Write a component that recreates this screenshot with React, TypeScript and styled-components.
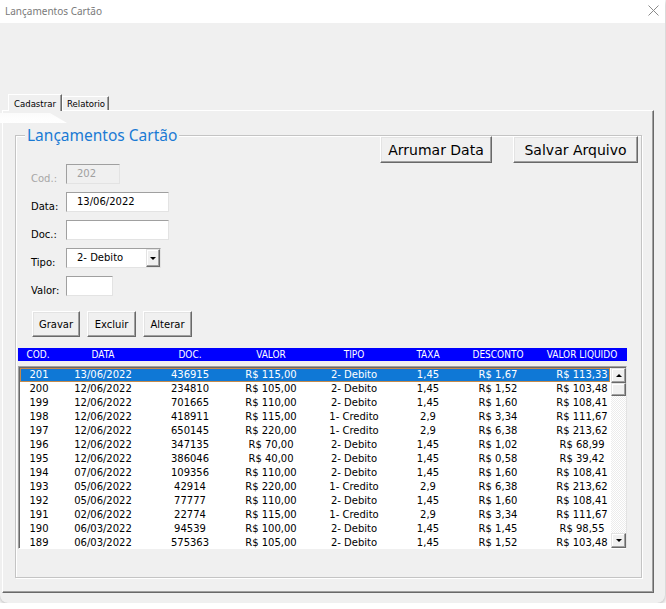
import React from 'react';
import styled, { createGlobalStyle } from 'styled-components';

const Global = createGlobalStyle`
  html, body { margin: 0; padding: 0; background: #ffffff; }
  body { font-family: "DejaVu Sans", sans-serif; }
  * { box-sizing: border-box; }
`;

const Window = styled.div`
  width: 665px;
  height: 603px;
  background: #f0f0f0;
  border-radius: 0 0 8px 8px;
  box-shadow: 0 1px 5px rgba(0, 0, 0, 0.35);
  display: flex;
  flex-direction: column;
  overflow: hidden;
`;

const TitleBar = styled.div`
  height: 23px;
  background: #ffffff;
  display: flex;
  align-items: center;
  justify-content: space-between;
  padding: 0 6px 2px 5px;
`;

const Title = styled.span`
  font-family: "Noto Sans", sans-serif;
  font-size: 10px;
  color: #7a7a7a;
`;

const Client = styled.div`
  padding-top: 70px;
  display: flex;
  flex-direction: column;
`;

const TabStrip = styled.div`
  display: flex;
  align-items: flex-end;
  height: 17px;
  padding-left: 8px;
`;

const Tab = styled.div<{ $active?: boolean; $w: number }>`
  width: ${(p) => p.$w}px;
  height: ${(p) => (p.$active ? 17 : 14)}px;
  font-family: "DejaVu Sans Condensed", "DejaVu Sans", sans-serif;
  font-stretch: condensed;
  font-size: 9.5px;
  color: #000;
  display: flex;
  align-items: center;
  padding-left: ${(p) => (p.$active ? 5 : 4)}px;
  border-top: 1px solid #ffffff;
  border-left: 1px solid #ffffff;
  border-right: 1px solid #696969;
  box-shadow: inset -1px 0 0 #a0a0a0;
  background: #f0f0f0;
  margin-bottom: ${(p) => (p.$active ? -1 : 0)}px;
  position: relative;
  z-index: ${(p) => (p.$active ? 1 : 0)};
`;

const TabPage = styled.div`
  margin-left: 2px;
  width: 652px;
  height: 483px;
  border-top: 1px solid #ffffff;
  border-left: 1px solid #ffffff;
  border-right: 1px solid #696969;
  border-bottom: 1px solid #696969;
  box-shadow: inset -1px -1px 0 #a0a0a0;
  display: flex;
  flex-direction: column;
  align-items: flex-start;
`;

const Glare = styled.div`
  width: 67px;
  height: 10px;
  margin: 2px 0 -12px -3px;
  background: linear-gradient(#fbfbfb, #ffffff);
  clip-path: polygon(0 0, 50px 0, 67px 100%, 0 100%);
`;

const Frame = styled.div`
  margin: 24px 0 0 12px;
  width: 627px;
  height: 443px;
  border: 1px solid #c4c4c4;
  box-shadow: 1px 1px 0 #ffffff, inset 1px 1px 0 #ffffff;
  display: flex;
  flex-direction: column;
  align-items: flex-start;
`;

const Legend = styled.div`
  margin: -11px 0 -9px 9px;
  padding: 0 2px;
  height: 20px;
  line-height: 20px;
  background: #f0f0f0;
  font-family: "Noto Sans", sans-serif;
  font-size: 15.5px;
  color: #1a7ad4;
  white-space: nowrap;
`;

const TopRow = styled.div`
  align-self: stretch;
  display: flex;
  justify-content: flex-end;
  gap: 21px;
  padding-right: 3px;
  height: 27px;
`;

const Button = styled.button<{ $w: number; $h: number; $fs: number }>`
  width: ${(p) => p.$w}px;
  height: ${(p) => p.$h}px;
  font-family: "DejaVu Sans", sans-serif;
  font-size: ${(p) => p.$fs}px;
  color: #000;
  background: #f0f0f0;
  padding: 0;
  border: 1px solid;
  border-color: #ffffff #696969 #696969 #ffffff;
  box-shadow: inset -1px -1px 0 #a0a0a0, inset 1px 1px 0 #e3e3e3;
  display: flex;
  align-items: center;
  justify-content: center;
  white-space: nowrap;
`;

const Form = styled.div`
  margin-top: 1px;
  padding-left: 15px;
  display: grid;
  grid-template-columns: 35px auto;
  row-gap: 8px;
  justify-items: start;
`;

const Label = styled.span<{ $disabled?: boolean }>`
  align-self: end;
  margin-bottom: -1px;
  font-size: 10px;
  line-height: 12px;
  color: ${(p) => (p.$disabled ? '#a7a7a7' : '#000')};
`;

const TextBox = styled.div<{ $w: number; $disabled?: boolean }>`
  width: ${(p) => p.$w}px;
  height: 20px;
  background: ${(p) => (p.$disabled ? '#f0f0f0' : '#ffffff')};
  border: 1px solid;
  border-color: #a0a0a0 #e3e3e3 #e3e3e3 #a0a0a0;
  padding-left: 10px;
  font-size: 10px;
  line-height: 18px;
  color: ${(p) => (p.$disabled ? '#a0a0a0' : '#000')};
  display: flex;
  align-items: center;
`;

const Combo = styled(TextBox)`
  padding-right: 0;
  justify-content: space-between;
`;

const DropButton = styled.div`
  width: 14px;
  height: 18px;
  background: #f0f0f0;
  border: 1px solid;
  border-color: #e3e3e3 #696969 #696969 #e3e3e3;
  box-shadow: inset -1px -1px 0 #a0a0a0, inset 1px 1px 0 #ffffff;
  display: flex;
  align-items: center;
  justify-content: center;
`;

const Arrow = styled.span<{ $up?: boolean }>`
  width: 0;
  height: 0;
  border-left: 3px solid transparent;
  border-right: 3px solid transparent;
  ${(p) => (p.$up ? 'border-bottom: 3px solid #000;' : 'border-top: 3px solid #000;')}
`;

const ActionRow = styled.div`
  margin-top: 15px;
  padding-left: 16px;
  display: flex;
  gap: 7px;
`;

const COLS_HEAD = '40px 90px 84px 78px 88px 60px 80px 88px';
const COLS_ROW = '38px 90px 84px 78px 88px 60px 80px 88px';

const HeaderBar = styled.div`
  margin: 11px 0 0 2px;
  width: 609px;
  height: 13px;
  background: #0000ff;
  color: #ffffff;
  display: grid;
  grid-template-columns: ${COLS_HEAD};
  font-family: "DejaVu Sans Condensed", "DejaVu Sans", sans-serif;
  font-stretch: condensed;
  font-size: 10px;
  line-height: 13px;
  text-align: center;
  white-space: nowrap;
`;

const ListBox = styled.div`
  margin: 5px 0 0 2px;
  width: 609px;
  height: 183px;
  background: #ffffff;
  border-top: 1px solid #a0a0a0;
  border-left: 1px solid #a0a0a0;
  border-right: 1px solid #e3e3e3;
  border-bottom: 1px solid #ffffff;
  box-shadow: inset 1px 1px 0 #696969;
  padding: 1px 0 0 1px;
  display: flex;
`;

const Rows = styled.div`
  flex: 1;
  overflow: hidden;
`;

const Row = styled.div<{ $selected?: boolean }>`
  height: 14px;
  display: grid;
  grid-template-columns: ${COLS_ROW};
  font-size: 10px;
  line-height: 14px;
  text-align: center;
  white-space: nowrap;
  color: ${(p) => (p.$selected ? '#ffffff' : '#000000')};
  background: ${(p) => (p.$selected ? '#0f78d6' : 'transparent')};
  box-shadow: ${(p) => (p.$selected ? 'inset 0 0 0 1px #c58a4a' : 'none')};
`;

const ScrollBar = styled.div`
  width: 15px;
  margin-left: 1px;
  display: flex;
  flex-direction: column;
`;

const ScrollBtn = styled.div<{ $h: number }>`
  height: ${(p) => p.$h}px;
  background: #f0f0f0;
  border: 1px solid;
  border-color: #e3e3e3 #696969 #696969 #e3e3e3;
  box-shadow: inset -1px -1px 0 #a0a0a0, inset 1px 1px 0 #ffffff;
  display: flex;
  align-items: center;
  justify-content: center;
`;

const Track = styled.div`
  flex: 1;
  background-color: #ffffff;
  background-image: repeating-conic-gradient(#ececec 0 25%, #ffffff 0 50%);
  background-size: 2px 2px;
`;

type R = [string, string, string, string, string, string, string, string];

const data: R[] = [
  ['201', '13/06/2022', '436915', 'R$ 115,00', '2- Debito', '1,45', 'R$ 1,67', 'R$ 113,33'],
  ['200', '12/06/2022', '234810', 'R$ 105,00', '2- Debito', '1,45', 'R$ 1,52', 'R$ 103,48'],
  ['199', '12/06/2022', '701665', 'R$ 110,00', '2- Debito', '1,45', 'R$ 1,60', 'R$ 108,41'],
  ['198', '12/06/2022', '418911', 'R$ 115,00', '1- Credito', '2,9', 'R$ 3,34', 'R$ 111,67'],
  ['197', '12/06/2022', '650145', 'R$ 220,00', '1- Credito', '2,9', 'R$ 6,38', 'R$ 213,62'],
  ['196', '12/06/2022', '347135', 'R$ 70,00', '2- Debito', '1,45', 'R$ 1,02', 'R$ 68,99'],
  ['195', '12/06/2022', '386046', 'R$ 40,00', '2- Debito', '1,45', 'R$ 0,58', 'R$ 39,42'],
  ['194', '07/06/2022', '109356', 'R$ 110,00', '2- Debito', '1,45', 'R$ 1,60', 'R$ 108,41'],
  ['193', '05/06/2022', '42914', 'R$ 220,00', '1- Credito', '2,9', 'R$ 6,38', 'R$ 213,62'],
  ['192', '05/06/2022', '77777', 'R$ 110,00', '2- Debito', '1,45', 'R$ 1,60', 'R$ 108,41'],
  ['191', '02/06/2022', '22774', 'R$ 115,00', '1- Credito', '2,9', 'R$ 3,34', 'R$ 111,67'],
  ['190', '06/03/2022', '94539', 'R$ 100,00', '2- Debito', '1,45', 'R$ 1,45', 'R$ 98,55'],
  ['189', '06/03/2022', '575363', 'R$ 105,00', '2- Debito', '1,45', 'R$ 1,52', 'R$ 103,48'],
];

const headers = ['COD.', 'DATA', 'DOC.', 'VALOR', 'TIPO', 'TAXA', 'DESCONTO', 'VALOR LIQUIDO'];

export default function App() {
  return (
    <>
      <Global />
      <Window>
        <TitleBar>
          <Title>Lançamentos Cartão</Title>
          <svg width="11" height="11" viewBox="0 0 11 11">
            <path d="M0.5 0.5 L10.5 10.5 M10.5 0.5 L0.5 10.5" stroke="#8a8a8a" strokeWidth="1" fill="none" />
          </svg>
        </TitleBar>
        <Client>
          <TabStrip>
            <Tab $active $w={54}>Cadastrar</Tab>
            <Tab $w={47}>Relatorio</Tab>
          </TabStrip>
          <TabPage>
            <Glare />
            <Frame>
              <Legend>Lançamentos Cartão</Legend>
              <TopRow>
                <Button $w={112} $h={27} $fs={14}>Arrumar Data</Button>
                <Button $w={125} $h={27} $fs={14}>Salvar Arquivo</Button>
              </TopRow>
              <Form>
                <Label $disabled>Cod.:</Label>
                <TextBox $w={54} $disabled>202</TextBox>
                <Label>Data:</Label>
                <TextBox $w={103}>13/06/2022</TextBox>
                <Label>Doc.:</Label>
                <TextBox $w={103} />
                <Label>Tipo:</Label>
                <Combo $w={95}>
                  <span>2- Debito</span>
                  <DropButton>
                    <Arrow />
                  </DropButton>
                </Combo>
                <Label>Valor:</Label>
                <TextBox $w={47} />
              </Form>
              <ActionRow>
                <Button $w={48} $h={26} $fs={10}>Gravar</Button>
                <Button $w={49} $h={26} $fs={10}>Excluir</Button>
                <Button $w={49} $h={26} $fs={10}>Alterar</Button>
              </ActionRow>
              <HeaderBar>
                {headers.map((h) => (
                  <span key={h}>{h}</span>
                ))}
              </HeaderBar>
              <ListBox>
                <Rows>
                  {data.map((r, i) => (
                    <Row key={r[0]} $selected={i === 0}>
                      {r.map((c, j) => (
                        <span key={j}>{c}</span>
                      ))}
                    </Row>
                  ))}
                </Rows>
                <ScrollBar>
                  <ScrollBtn $h={15}>
                    <Arrow $up />
                  </ScrollBtn>
                  <ScrollBtn $h={13} />
                  <Track />
                  <ScrollBtn $h={15}>
                    <Arrow />
                  </ScrollBtn>
                </ScrollBar>
              </ListBox>
            </Frame>
          </TabPage>
        </Client>
      </Window>
    </>
  );
}
